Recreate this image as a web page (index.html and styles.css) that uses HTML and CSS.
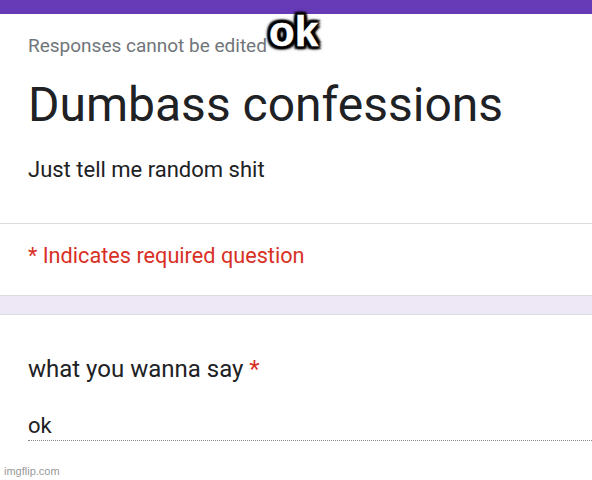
FILE: index.html
```html
<!DOCTYPE html>
<html>
<head>
<meta charset="utf-8">
<link rel="stylesheet" href="styles.css">
</head>
<body>
<div class="page">
  <div class="topbar"></div>
  <section class="header-card">
    <div class="note">Responses cannot be edited</div>
    <h1 class="title">Dumbass confessions</h1>
    <div class="desc">Just tell me random shit</div>
  </section>
  <section class="required-row">
    <div class="required">* Indicates required question</div>
  </section>
  <div class="band"></div>
  <section class="question">
    <div class="q-label">what you wanna say <span class="star">*</span></div>
    <div class="answer">ok</div>
  </section>
  <div class="watermark">imgflip.com</div>
  <div class="meme">ok</div>
</div>
</body>
</html>
```
FILE: styles.css
```css
html, body {
  margin: 0;
  padding: 0;
  background: #fff;
}
.page {
  position: relative;
  width: 592px;
  height: 480px;
  overflow: hidden;
  font-family: Roboto, "Liberation Sans", sans-serif;
  color: #202124;
}
.topbar {
  height: 14px;
  background: #673ab7;
}
.header-card {
  padding: 19px 0 0 28px;
  height: 210px;
  box-sizing: border-box;
  border-bottom: 1px solid #dadce0;
}
.note {
  font-size: 19px;
  color: #70757a;
  line-height: 26px;
}
.title {
  margin: 18px 0 0 0;
  font-weight: 400;
  font-size: 48px;
  line-height: 56px;
}
.desc {
  margin-top: 23px;
  font-size: 22px;
  line-height: 28px;
}
.required-row {
  height: 71px;
  box-sizing: border-box;
  padding: 19px 0 0 28px;
}
.required {
  color: #d93025;
  font-size: 21.7px;
  line-height: 26px;
}
.band {
  height: 18px;
  background: #ede7f6;
  border-top: 1px solid #dadce0;
  border-bottom: 1px solid #dadce0;
}
.question {
  padding: 39px 0 0 28px;
}
.q-label {
  font-size: 24px;
  line-height: 30px;
}
.star {
  color: #d93025;
}
.answer {
  margin-top: 28px;
  font-size: 22px;
  line-height: 28px;
  border-bottom: 1px dotted #8a8a8a;
}
.watermark {
  position: absolute;
  left: 4px;
  top: 465px;
  font-family: "Liberation Sans", Arial, sans-serif;
  font-size: 11px;
  color: #9a9a9a;
}
.meme {
  position: absolute;
  left: 269px;
  top: 9px;
  font-family: "Liberation Sans", Arial, sans-serif;
  font-weight: 700;
  font-size: 42px;
  line-height: 46px;
  color: #fff;
  -webkit-text-stroke: 0.5px #fff;
  text-shadow:
    -3px -3px 2px #000, 3px -3px 2px #000, -3px 3px 2px #000, 3px 3px 2px #000,
    0 -3px 2px #000, 0 3px 2px #000, -3px 0 2px #000, 3px 0 2px #000,
    0 0 6px #000;
}
```
